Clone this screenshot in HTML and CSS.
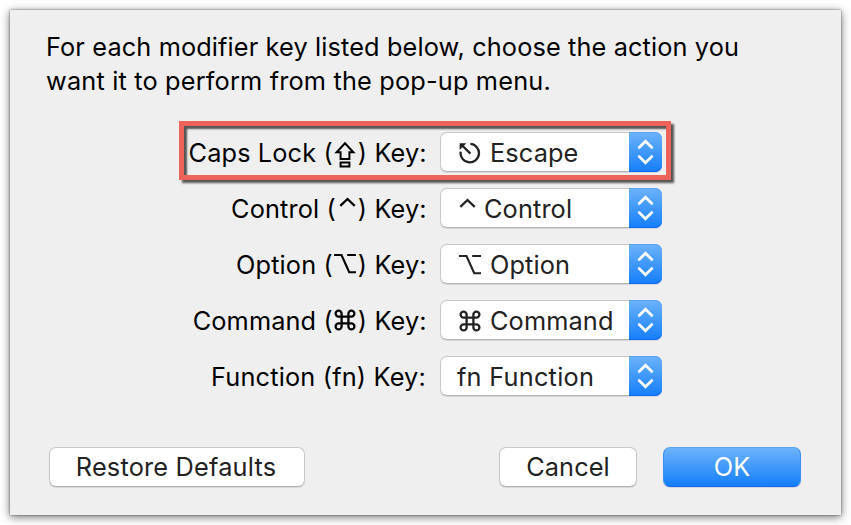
FILE: index.html
```html
<!DOCTYPE html>
<html lang="en">
<head>
<meta charset="utf-8">
<title>Modifier Keys</title>
<link rel="stylesheet" href="styles.css">
</head>
<body>
<svg class="defs" width="0" height="0" aria-hidden="true">
  <symbol id="caps" viewBox="0 0 22 28"><path d="M11 2.2 2.6 11.2H6.6V18H15.4V11.2H19.4ZM6.6 21.6H15.4V25.4H6.6Z" stroke-width="2"/></symbol>
  <symbol id="control" viewBox="0 0 17 28"><path d="M1.3 8.8 8.5 2 15.7 8.8"/></symbol>
  <symbol id="option" viewBox="0 0 22 28"><path d="M0 2H7.5L15.2 19.2H22M13.2 2H22" stroke-width="2.1"/></symbol>
  <symbol id="command" viewBox="0 0 22 28"><path d="M7.6 7.6V4.6A3 3 0 1 0 4.6 7.6M4.6 7.6H17.4A3 3 0 1 0 14.4 4.6V17.4A3 3 0 1 0 17.4 14.4H4.6A3 3 0 1 0 7.6 17.4V7.6"/></symbol>
  <symbol id="escape" viewBox="0 0 22 28"><path d="M11.4 1.9A9.2 9.2 0 1 1 1.7 9.6M11.4 11.6 3.5 3.7"/><path class="solid" d="M.6 1.2H7.4L.6 8Z"/></symbol>
  <symbol id="arrows" viewBox="0 0 33 40"><path d="M10.2 15.5 16.5 9.2 22.8 15.5M10.2 24.5 16.5 30.8 22.8 24.5" stroke-width="2.7" stroke-linecap="round"/></symbol>
</svg>
<main class="dialog">
  <p class="intro">For each modifier key listed below, choose the action you<br><span class="second-line">want it to perform from the pop-up menu.</span></p>
  <div class="rows">
    <div class="row marked">
      <span class="label">Caps Lock (<svg class="glyph"><use href="#caps"/></svg>) Key:</span>
      <button class="select"><svg class="glyph"><use href="#escape"/></svg><span class="value">Escape</span><svg class="arrows"><use href="#arrows"/></svg></button>
    </div>
    <div class="row">
      <span class="label">Control (<svg class="glyph caret"><use href="#control"/></svg>) Key:</span>
      <button class="select"><svg class="glyph caret"><use href="#control"/></svg><span class="value">Control</span><svg class="arrows"><use href="#arrows"/></svg></button>
    </div>
    <div class="row">
      <span class="label">Option (<svg class="glyph"><use href="#option"/></svg>) Key:</span>
      <button class="select"><svg class="glyph"><use href="#option"/></svg><span class="value">Option</span><svg class="arrows"><use href="#arrows"/></svg></button>
    </div>
    <div class="row">
      <span class="label">Command (<svg class="glyph"><use href="#command"/></svg>) Key:</span>
      <button class="select"><svg class="glyph"><use href="#command"/></svg><span class="value">Command</span><svg class="arrows"><use href="#arrows"/></svg></button>
    </div>
    <div class="row">
      <span class="label fn">Function (fn) Key:</span>
      <button class="select"><span class="value text-only">fn Function</span><svg class="arrows"><use href="#arrows"/></svg></button>
    </div>
  </div>
  <footer class="actions">
    <button class="button restore">Restore Defaults</button>
    <button class="button cancel">Cancel</button>
    <button class="button primary">OK</button>
  </footer>
</main>
</body>
</html>
```
FILE: styles.css
```css
*, *::after { box-sizing: border-box; }
body {
  margin: 0;
  padding: 10px;
  height: 525px;
  overflow: hidden;
  background: #fff;
  font-family: Inter, "Liberation Sans", sans-serif;
  font-size: 25.3px;
  letter-spacing: .13px;
  color: #000;
}
.defs { position: absolute; }
svg { fill: none; stroke: currentColor; stroke-width: 2.3; }
.solid { fill: currentColor; stroke: none; }
.dialog {
  display: flex;
  flex-direction: column;
  width: 831px;
  height: 505px;
  background: #efefef;
  box-shadow: 0 0 2px rgba(0,0,0,.5), 0 2px 9px rgba(0,0,0,.55);
}
.intro {
  margin: 20px 0 0 36px;
  line-height: 34px;
  white-space: nowrap;
}
.second-line { letter-spacing: .18px; }
.rows {
  display: flex;
  flex-direction: column;
  gap: 16px;
  margin-top: 34px;
}
.row {
  position: relative;
  display: grid;
  grid-template-columns: 417px 222px;
  grid-template-rows: 40px;
  column-gap: 13px;
  height: 40px;
  align-items: center;
}
.label {
  display: flex;
  justify-content: flex-end;
  height: 40px;
  padding-right: .3px;
  white-space: pre;
  line-height: 42px;
}
.fn { padding-right: 1px; letter-spacing: .18px; }
.glyph { flex: none; width: 22px; height: 28px; margin: 9px 1.5px 0 1.5px; }
.caret { width: 17px; margin-left: 3px; margin-right: 2px; }
.select {
  display: flex;
  align-items: center;
  height: 40px;
  padding: 0 0 0 17px;
  border: 1px solid #c8c8c8;
  border-bottom-color: #b4b4b4;
  border-right: 0;
  border-radius: 7px;
  background: #fff;
  box-shadow: 0 1px 1px rgba(0,0,0,.1);
  font: inherit;
  letter-spacing: inherit;
  color: #222;
  text-align: left;
}
.select .glyph { margin: 8px 9px 0 1px; }
.select .caret { margin-right: 8px; }
.value { flex: 1; line-height: 38px; padding-top: 2px; white-space: nowrap; }
.text-only { margin-left: -1px; letter-spacing: .25px; }
.arrows {
  flex: none;
  width: 33px;
  height: 40px;
  margin: -1px 0;
  border-radius: 0 7px 7px 0;
  background: linear-gradient(#6cb3fa, #157efb);
  box-shadow: inset 0 1px #5ca5f1, inset 0 -1px #0d68f2;
  color: #fff;
}
.marked::after {
  content: "";
  position: absolute;
  left: 169px;
  top: -11px;
  width: 492px;
  height: 59px;
  border: 5px solid #ec6459;
  box-shadow: 3px 3px 2px #555, inset 3px 3px 2px #555;
  pointer-events: none;
}
.actions {
  display: flex;
  margin: 51px 40px 0 39px;
}
.button {
  height: 40px;
  padding: 0 0 2px;
  border: 1px solid #c8c8c8;
  border-bottom-color: #b0b0b0;
  border-radius: 7px;
  background: #fff;
  box-shadow: 0 1px 1px rgba(0,0,0,.1);
  font: inherit;
  letter-spacing: inherit;
  color: #222;
}
.restore { width: 256px; margin-right: auto; padding-right: 2px; letter-spacing: .2px; }
.cancel { width: 138px; margin-right: 26px; }
.primary {
  width: 138px;
  border-color: #5aa3f0 #3a90f5 #0d68f2;
  background: linear-gradient(#6cb3fa, #157efb);
  color: #fff;
}
```
